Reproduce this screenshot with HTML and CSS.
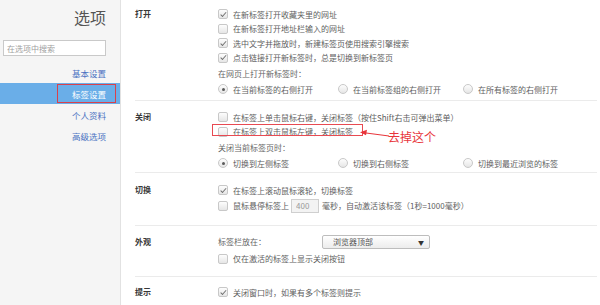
FILE: index.html
```html
<!DOCTYPE html>
<html lang="zh-CN">

    <head>
        <meta charset="UTF-8">
        <title>选项 - 标签设置</title>
        <link rel="stylesheet" href="styles.css">
    </head>

    <body>
        <div class="page">
            <!-- 左侧导航 -->
            <aside class="sidebar">
                <h1 class="title">选项</h1>
                <input class="search" type="text" placeholder="在选项中搜索">
                <nav class="menu">
                    <a class="menu-item"><span>基本设置</span></a>
                    <a class="menu-item active"><span class="marked">标签设置</span></a>
                    <a class="menu-item"><span>个人资料</span></a>
                    <a class="menu-item"><span>高级选项</span></a>
                </nav>
            </aside>

            <main class="content">
                <!-- 打开 -->
                <section class="group group-open">
                    <div class="group-title">打开</div>
                    <div class="group-body">
                        <div class="check"><i class="box on"></i>在新标签打开收藏夹里的网址</div>
                        <div class="check"><i class="box"></i>在新标签打开地址栏输入的网址</div>
                        <div class="check"><i class="box on"></i>选中文字并拖放时，新建标签页使用搜索引擎搜索</div>
                        <div class="check"><i class="box on"></i>点击链接打开新标签时，总是切换到新标签页</div>
                        <div class="hint">在网页上打开新标签时：</div>
                        <div class="radios">
                            <div class="radio"><i class="dot on"></i>在当前标签的右侧打开</div>
                            <div class="radio"><i class="dot"></i>在当前标签组的右侧打开</div>
                            <div class="radio"><i class="dot"></i>在所有标签的右侧打开</div>
                        </div>
                    </div>
                </section>

                <!-- 关闭 -->
                <section class="group group-close">
                    <div class="group-title">关闭</div>
                    <div class="group-body">
                        <div class="check"><i class="box"></i>在标签上单击鼠标右键，关闭标签（按住Shift右击可弹出菜单）</div>
                        <div class="check noted">
                            <i class="box"></i>在标签上双击鼠标左键，关闭标签
                            <span class="note-box"></span>
                            <svg class="note-arrow" width="34" height="14" viewBox="0 0 34 14">
                                <line x1="31" y1="9" x2="5" y2="5.6" stroke="#e8353b" stroke-width="1"></line>
                                <polygon points="2,5.2 9,2.8 8,8.2" fill="#e8353b"></polygon>
                            </svg>
                            <span class="note-text">去掉这个</span>
                        </div>
                        <div class="hint">关闭当前标签页时：</div>
                        <div class="radios">
                            <div class="radio"><i class="dot on"></i>切换到左侧标签</div>
                            <div class="radio"><i class="dot"></i>切换到右侧标签</div>
                            <div class="radio"><i class="dot"></i>切换到最近浏览的标签</div>
                        </div>
                    </div>
                </section>

                <!-- 切换 -->
                <section class="group group-switch">
                    <div class="group-title">切换</div>
                    <div class="group-body">
                        <div class="check"><i class="box on"></i>在标签上滚动鼠标滚轮，切换标签</div>
                        <div class="check tall">
                            <i class="box"></i>鼠标悬停标签上
                            <input class="delay" type="text" value="400">
                            毫秒，自动激活该标签（1秒=1000毫秒）
                        </div>
                    </div>
                </section>

                <!-- 外观 -->
                <section class="group group-look">
                    <div class="group-title">外观</div>
                    <div class="group-body">
                        <div class="select-row">
                            <span class="select-label">标签栏放在：</span>
                            <div class="select">浏览器顶部<span class="caret">▼</span></div>
                        </div>
                        <div class="check"><i class="box"></i>仅在激活的标签上显示关闭按钮</div>
                    </div>
                </section>

                <!-- 提示 -->
                <section class="group group-tip">
                    <div class="group-title">提示</div>
                    <div class="group-body">
                        <div class="check"><i class="box on"></i>关闭窗口时，如果有多个标签则提示</div>
                    </div>
                </section>
            </main>
        </div>
    </body>

</html>
```

FILE: styles.css
```css
body {
    margin: 0;
    overflow: hidden;
    background: #fff;
    font-family: "Noto Sans CJK SC", "Liberation Sans", sans-serif;
    color: #5e5e5e;
}

.page {
    display: flex;
    height: 305px;
}

/* 左侧导航 */
.sidebar {
    width: 120px;
    flex: none;
    background-color: #f5f5f5;
    border-right: 1px solid #e2e2e2;
}

.title {
    margin: 6px 14px 0 0;
    height: 23px;
    text-align: right;
    font-size: 16px;
    line-height: 23px;
    font-weight: normal;
    color: #555;
}

.search {
    display: block;
    box-sizing: border-box;
    margin: 11px 0 0 3px;
    width: 103px;
    height: 16px;
    padding: 0 3px;
    border: 1px solid #c9c9c9;
    background: #fff;
    font-family: inherit;
    font-size: 8px;
    color: #555;
    outline: none;
}

.search::placeholder {
    color: #a0a0a0;
}

.menu {
    margin-top: 6px;
}

.menu-item {
    display: flex;
    justify-content: flex-end;
    align-items: center;
    height: 21px;
    padding-right: 14px;
    font-size: 8.5px;
    color: #4a72c2;
    cursor: pointer;
}

.menu-item.active {
    padding-right: 4px;
    background-color: #6aaee8;
    color: #fff;
}

.marked {
    display: flex;
    align-items: center;
    height: 17px;
    padding: 0 9px 0 14px;
    border: 1px solid #d9414c;
}

/* 右侧内容 */
.content {
    flex: 1;
    padding: 0 3px 0 14px;
    font-size: 8px;
}

.group {
    display: flex;
    border-bottom: 1px solid #ebebeb;
}

.group-open {
    padding: 7px 0 3px;
}

.group-close {
    padding: 9px 0 1px;
}

.group-switch {
    padding: 10px 0 11px;
}

.group-look {
    padding: 9px 0 10px;
}

.group-tip {
    padding: 8px 0 0;
    border-bottom: none;
}

.group-title {
    width: 83px;
    flex: none;
    height: 14.5px;
    line-height: 14.5px;
    font-weight: bold;
    color: #383838;
}

.group-look .group-title {
    height: 14px;
    line-height: 14px;
}

.group-body {
    flex: 1;
}

.check {
    display: flex;
    align-items: center;
    height: 14.5px;
    white-space: nowrap;
}

.check.tall {
    height: 16px;
}

.box,
.dot {
    position: relative;
    flex: none;
    box-sizing: border-box;
    width: 10px;
    height: 10px;
    margin-right: 5px;
    border: 1px solid #c8c8c8;
    background: linear-gradient(#fdfdfd, #e6e6e6);
}

.box {
    border-radius: 2px;
}

.box.on::after {
    content: "";
    position: absolute;
    left: 2.6px;
    top: 0.6px;
    width: 2.4px;
    height: 4.6px;
    border: solid #707070;
    border-width: 0 1.4px 1.4px 0;
    transform: rotate(42deg);
}

.dot {
    border-radius: 50%;
}

.dot.on::after {
    content: "";
    position: absolute;
    left: 2.5px;
    top: 2.5px;
    width: 3px;
    height: 3px;
    border-radius: 50%;
    background: #5a5a5a;
}

.hint {
    display: flex;
    align-items: center;
    height: 16px;
    color: #666;
}

.radios {
    display: flex;
    height: 16px;
}

.radio {
    display: flex;
    align-items: center;
    white-space: nowrap;
}

.radio:nth-child(1) {
    width: 120px;
}

.radio:nth-child(2) {
    width: 125px;
}

.delay {
    box-sizing: border-box;
    width: 28px;
    height: 14px;
    margin: 0 3px 0 2px;
    padding: 0 4px;
    border: 1px solid #cfcfcf;
    background: #f3f3f3;
    font-family: inherit;
    font-size: 8px;
    color: #999;
}

.select-row {
    display: flex;
    align-items: center;
    height: 14px;
    margin-bottom: 3px;
}

.select-label {
    width: 104px;
    color: #666;
}

.select {
    position: relative;
    box-sizing: border-box;
    display: flex;
    align-items: center;
    width: 108px;
    height: 14px;
    padding-left: 10px;
    border: 1px solid #bdbdbd;
    border-radius: 2px;
    background: linear-gradient(#fff, #ececec);
    color: #555;
}

.caret {
    position: absolute;
    right: 5px;
    top: 2px;
    font-size: 6px;
    color: #333;
}

/* 标注 */
.noted {
    position: relative;
}

.note-box {
    position: absolute;
    left: -6px;
    top: -0.5px;
    width: 151px;
    height: 12px;
    border: 1px solid #e84a52;
    box-sizing: border-box;
}

.note-arrow {
    position: absolute;
    left: 140px;
    top: 2px;
}

.note-text {
    position: absolute;
    left: 170px;
    top: 5px;
    font-size: 12px;
    line-height: 14px;
    color: #e8353b;
}
```
